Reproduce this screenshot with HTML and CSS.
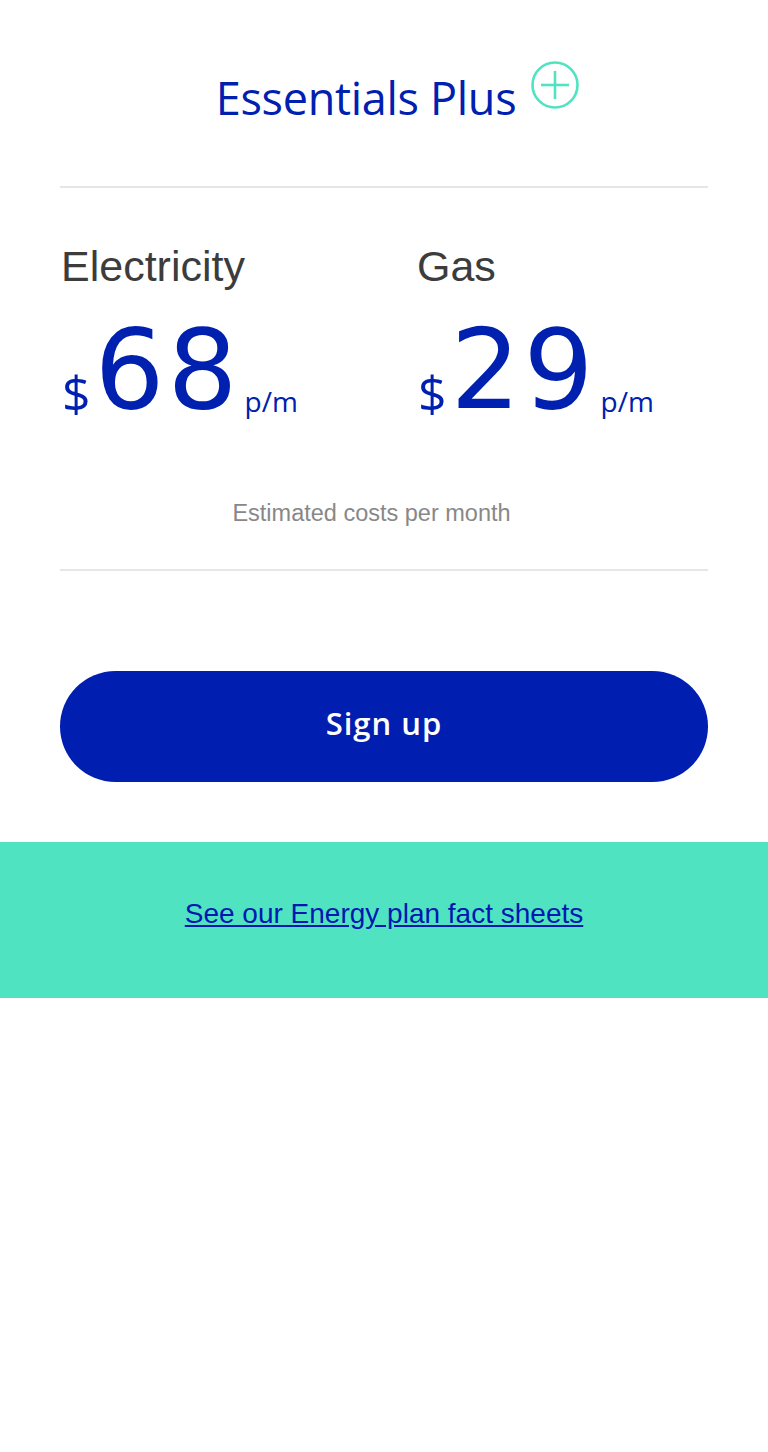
FILE: index.html
```html
<!DOCTYPE html>
<html>
<head>
<meta charset="utf-8">
<link rel="stylesheet" href="styles.css">
</head>
<body>
<div class="card">
  <div class="title-row">
    <h1 class="title">Essentials Plus</h1>
    <svg class="plus" width="50" height="50" viewBox="0 0 50 50">
      <circle cx="25" cy="25" r="22.5" fill="none" stroke="#50e3c2" stroke-width="2.6"/>
      <line x1="25" y1="11" x2="25" y2="39" stroke="#50e3c2" stroke-width="2.6"/>
      <line x1="11" y1="25" x2="39" y2="25" stroke="#50e3c2" stroke-width="2.6"/>
    </svg>
  </div>
  <hr class="rule">
  <div class="prices">
    <div class="price-col">
      <div class="label">Electricity</div>
      <div class="amount"><span class="dollar">$</span><span class="num">68</span><span class="per">p/m</span></div>
    </div>
    <div class="price-col">
      <div class="label">Gas</div>
      <div class="amount"><span class="dollar">$</span><span class="num">29</span><span class="per">p/m</span></div>
    </div>
  </div>
  <p class="note">Estimated costs per month</p>
  <hr class="rule">
  <button class="signup">Sign up</button>
</div>
<div class="band">
  <a class="facts" href="#">See our Energy plan fact sheets</a>
</div>
</body>
</html>
```
FILE: styles.css
```css
* { box-sizing: border-box; }
body {
  margin: 0;
  background: #fff;
  font-family: "Liberation Sans", Arial, sans-serif;
}
.card {
  padding: 0 60px;
}
.title-row {
  display: flex;
  justify-content: center;
  align-items: flex-start;
  padding-top: 60px;
  padding-left: 28px;
  height: 186px;
}
.title {
  margin: 8px 0 0 0;
  font-family: "Open Sans", sans-serif;
  font-weight: 400;
  font-size: 45px;
  line-height: 60px;
  letter-spacing: -0.3px;
  color: #0020b0;
}
.plus {
  margin-left: 14px;
  margin-top: 0;
}
.rule {
  margin: 0;
  border: 0;
  border-top: 2px solid #e6e6e6;
}
.prices {
  display: grid;
  grid-template-columns: 356px 1fr;
  padding-top: 52px;
}
.label {
  font-size: 43px;
  line-height: 52px;
  color: #3c3c3c;
  padding-left: 1px;
}
.amount {
  display: flex;
  align-items: baseline;
  color: #0020b0;
  font-family: "Open Sans", sans-serif;
  margin-top: 8px;
}
.dollar {
  font-size: 50px;
  margin-left: 2px;
  position: relative;
  top: 4px;
}
.num {
  font-family: "DejaVu Sans", sans-serif;
  font-size: 110px;
  line-height: 140px;
  letter-spacing: 3px;
  margin-left: 4px;
}
.per {
  font-size: 28px;
  margin-left: 4px;
  position: relative;
  top: 4px;
}
.note {
  margin: 59px 0 0 0;
  text-align: center;
  font-size: 23.5px;
  line-height: 28px;
  color: #888;
  padding-right: 25px;
  padding-bottom: 42px;
}
.signup {
  display: block;
  width: 100%;
  height: 111px;
  margin: 100px 0 60px 0;
  padding: 0 0 8px 0;
  border: 0;
  border-radius: 56px;
  background: #001eb0;
  color: #fff;
  font-family: "Open Sans", sans-serif;
  font-weight: 600;
  font-size: 31px;
  letter-spacing: 1px;
}
.band {
  background: #50e3c2;
  height: 156px;
  display: flex;
  justify-content: center;
  align-items: center;
  padding-bottom: 12px;
}
.facts {
  font-size: 28px;
  color: #0018b0;
  text-decoration: underline;
}
```
